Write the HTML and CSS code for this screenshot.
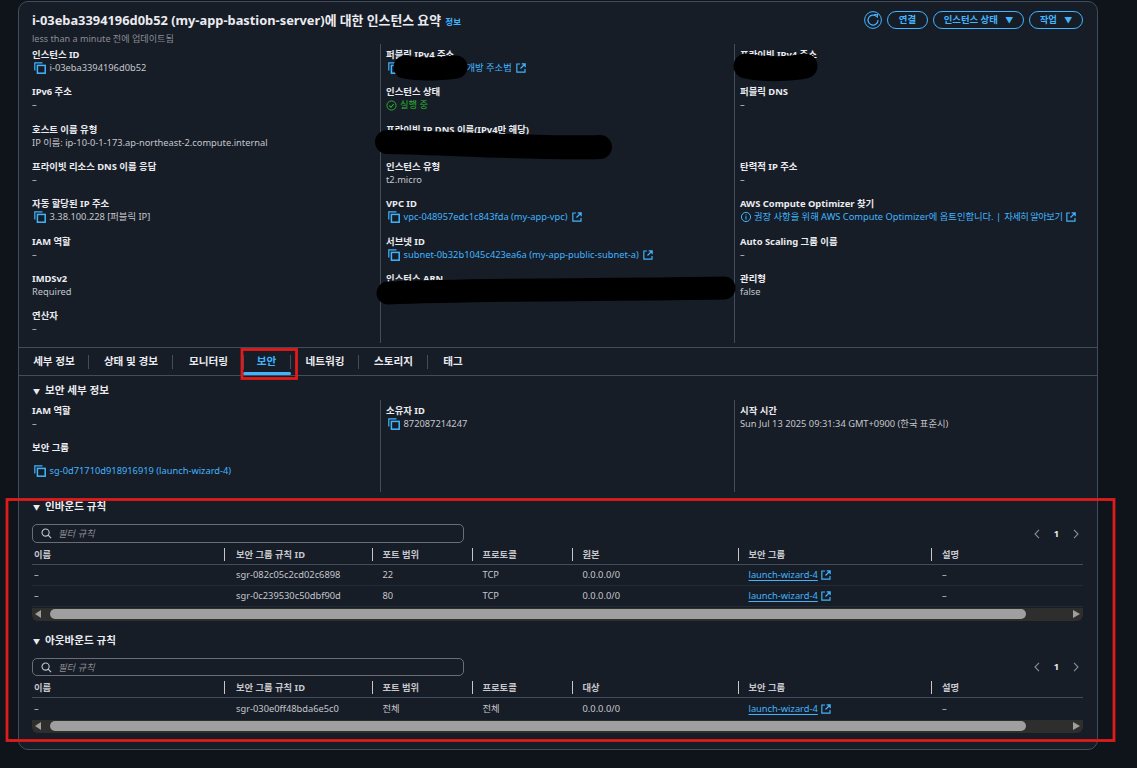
FILE: index.html
```html
<!DOCTYPE html>
<html lang="ko">
<head>
<meta charset="utf-8">
<title>인스턴스 요약</title>
<link rel="stylesheet" href="styles.css">
</head>
<body>
<svg class="defs" width="0" height="0" aria-hidden="true">
  <symbol id="copy" viewBox="0 0 12 12"><path d="M.8 8.5V.8h7.7" fill="none" stroke="currentColor" stroke-width="1.2"/><rect x="3.4" y="3.4" width="7.8" height="7.8" fill="none" stroke="currentColor" stroke-width="1.5"/></symbol>
  <symbol id="ext" viewBox="0 0 12 12"><path d="M4.8 1.2H1v9.8h9.8V7.2M6.8 1h4.2v4.2M10.8 1.2 5.4 6.6" fill="none" stroke="currentColor" stroke-width="1.4"/></symbol>
  <symbol id="search" viewBox="0 0 12 12"><circle cx="5" cy="5" r="3.9" fill="none" stroke="currentColor" stroke-width="1.2"/><path d="m7.8 7.8 3.2 3.2" stroke="currentColor" stroke-width="1.3"/></symbol>
  <symbol id="chev-l" viewBox="0 0 6 10"><path d="M5 .8 1 5l4 4.2" fill="none" stroke="currentColor" stroke-width="1.1"/></symbol>
  <symbol id="chev-r" viewBox="0 0 6 10"><path d="M1 .8 5 5 1 9.2" fill="none" stroke="currentColor" stroke-width="1.1"/></symbol>
</svg>
<main class="panel">
  <header class="head">
    <div>
      <h1 class="title">i-03eba3394196d0b52 (my-app-bastion-server)에 대한 인스턴스 요약 <a class="info">정보</a></h1>
      <p class="updated">less than a minute 전에 업데이트됨</p>
    </div>
    <div class="actions">
      <button class="refresh" aria-label="새로 고침"><svg viewBox="0 0 18 18" width="18" height="18"><circle cx="9" cy="9" r="8.4" fill="none" stroke="currentColor" stroke-width="1"/><path d="M12.6 5.6A5 5 0 1 0 14 9" fill="none" stroke="currentColor" stroke-width="1.2"/><path d="M10.2 3.6h3.2v3.2" fill="none" stroke="currentColor" stroke-width="1.2"/></svg></button>
      <button class="btn btn-connect">연결</button>
      <button class="btn btn-state">인스턴스 상태 <span class="caret">▼</span></button>
      <button class="btn btn-action">작업 <span class="caret">▼</span></button>
    </div>
  </header>

  <section class="summary">
    <div class="col">
      <div class="kv"><h3>인스턴스 ID</h3><p><svg class="ic-copy"><use href="#copy"/></svg>i-03eba3394196d0b52</p></div>
      <div class="kv"><h3>IPv6 주소</h3><p>–</p></div>
      <div class="kv"><h3>호스트 이름 유형</h3><p>IP 이름: ip-10-0-1-173.ap-northeast-2.compute.internal</p></div>
      <div class="kv"><h3>프라이빗 리소스 DNS 이름 응답</h3><p>–</p></div>
      <div class="kv"><h3>자동 할당된 IP 주소</h3><p><svg class="ic-copy"><use href="#copy"/></svg>3.38.100.228 [퍼블릭 IP]</p></div>
      <div class="kv"><h3>IAM 역할</h3><p>–</p></div>
      <div class="kv"><h3>IMDSv2</h3><p>Required</p></div>
      <div class="kv"><h3>연산자</h3><p>–</p></div>
    </div>
    <div class="col ruled">
      <div class="kv"><h3>퍼블릭 IPv4 주소</h3><p class="link"><svg class="ic-copy"><use href="#copy"/></svg><span class="masked"></span>개방 주소법<svg class="ic-ext"><use href="#ext"/></svg></p></div>
      <div class="kv"><h3>인스턴스 상태</h3><p class="ok"><svg class="ic-ok" viewBox="0 0 12 12"><circle cx="6" cy="6" r="5" fill="none" stroke="currentColor" stroke-width="1"/><path d="m3.6 6.2 1.8 1.8 3-3.6" fill="none" stroke="currentColor" stroke-width="1.1"/></svg>실행 중</p></div>
      <div class="kv"><h3>프라이빗 IP DNS 이름(IPv4만 해당)</h3><p></p></div>
      <div class="kv"><h3>인스턴스 유형</h3><p>t2.micro</p></div>
      <div class="kv"><h3>VPC ID</h3><p class="link"><svg class="ic-copy"><use href="#copy"/></svg>vpc-048957edc1c843fda (my-app-vpc)<svg class="ic-ext"><use href="#ext"/></svg></p></div>
      <div class="kv"><h3>서브넷 ID</h3><p class="link"><svg class="ic-copy"><use href="#copy"/></svg>subnet-0b32b1045c423ea6a (my-app-public-subnet-a)<svg class="ic-ext"><use href="#ext"/></svg></p></div>
      <div class="kv"><h3>인스턴스 ARN</h3><p></p></div>
    </div>
    <div class="col ruled">
      <div class="kv"><h3>프라이빗 IPv4 주소</h3><p></p></div>
      <div class="kv"><h3>퍼블릭 DNS</h3><p>–</p></div>
      <div class="kv"></div>
      <div class="kv"><h3>탄력적 IP 주소</h3><p>–</p></div>
      <div class="kv"><h3>AWS Compute Optimizer 찾기</h3><p class="optimizer"><svg class="ic-info" viewBox="0 0 12 12"><circle cx="6" cy="6" r="4.6" fill="none" stroke="currentColor" stroke-width="1"/><path d="M6 5.2v3.4M6 3.4v1" stroke="currentColor" stroke-width="1"/></svg>권장 사항을 위해 AWS Compute Optimizer에 옵트인합니다. |<span class="more">자세히 알아보기<svg class="ic-ext"><use href="#ext"/></svg></span></p></div>
      <div class="kv"><h3>Auto Scaling 그룹 이름</h3><p>–</p></div>
      <div class="kv"><h3>관리형</h3><p>false</p></div>
    </div>
  </section>

  <nav class="tabs">
    <a class="tab t1">세부 정보</a>
    <a class="tab t2">상태 및 경보</a>
    <a class="tab t3">모니터링</a>
    <a class="tab t4 active">보안</a>
    <a class="tab t5">네트워킹</a>
    <a class="tab t6">스토리지</a>
    <a class="tab t7">태그</a>
  </nav>

  <h2 class="sec-title detail-title"><span class="tri">▼</span>보안 세부 정보</h2>
  <section class="details">
    <div class="col">
      <div class="kv"><h3>IAM 역할</h3><p>–</p></div>
      <div class="kv tall"><h3>보안 그룹</h3><p class="link"><svg class="ic-copy"><use href="#copy"/></svg>sg-0d71710d918916919 (launch-wizard-4)</p></div>
    </div>
    <div class="col ruled">
      <div class="kv"><h3>소유자 ID</h3><p><svg class="ic-copy"><use href="#copy"/></svg>872087214247</p></div>
    </div>
    <div class="col ruled">
      <div class="kv"><h3>시작 시간</h3><p>Sun Jul 13 2025 09:31:34 GMT+0900 (한국 표준시)</p></div>
    </div>
  </section>

  <section class="rules inbound">
    <h2 class="sec-title"><span class="tri">▼</span>인바운드 규칙</h2>
    <div class="filter-row">
      <label class="filter"><svg class="ic-search"><use href="#search"/></svg><input placeholder="필터 규칙"></label>
      <div class="pager"><svg class="chev"><use href="#chev-l"/></svg><b>1</b><svg class="chev"><use href="#chev-r"/></svg></div>
    </div>
    <div class="row thead">
      <span>이름</span><span>보안 그룹 규칙 ID</span><span>포트 범위</span><span>프로토콜</span><span>원본</span><span>보안 그룹</span><span>설명</span>
    </div>
    <div class="row">
      <span>–</span><span>sgr-082c05c2cd02c6898</span><span>22</span><span>TCP</span><span>0.0.0.0/0</span><span class="link"><u>launch-wizard-4</u><svg class="ic-ext"><use href="#ext"/></svg></span><span>–</span>
    </div>
    <div class="row">
      <span>–</span><span>sgr-0c239530c50dbf90d</span><span>80</span><span>TCP</span><span>0.0.0.0/0</span><span class="link"><u>launch-wizard-4</u><svg class="ic-ext"><use href="#ext"/></svg></span><span>–</span>
    </div>
    <div class="scrollbar"><i class="arrow-l"></i><div class="thumb"></div><i class="arrow-r"></i></div>
  </section>

  <section class="rules outbound">
    <h2 class="sec-title"><span class="tri">▼</span>아웃바운드 규칙</h2>
    <div class="filter-row">
      <label class="filter"><svg class="ic-search"><use href="#search"/></svg><input placeholder="필터 규칙"></label>
      <div class="pager"><svg class="chev"><use href="#chev-l"/></svg><b>1</b><svg class="chev"><use href="#chev-r"/></svg></div>
    </div>
    <div class="row thead">
      <span>이름</span><span>보안 그룹 규칙 ID</span><span>포트 범위</span><span>프로토콜</span><span>대상</span><span>보안 그룹</span><span>설명</span>
    </div>
    <div class="row last">
      <span>–</span><span>sgr-030e0ff48bda6e5c0</span><span>전체</span><span>전체</span><span>0.0.0.0/0</span><span class="link"><u>launch-wizard-4</u><svg class="ic-ext"><use href="#ext"/></svg></span><span>–</span>
    </div>
    <div class="scrollbar"><i class="arrow-l"></i><div class="thumb"></div><i class="arrow-r"></i></div>
  </section>
</main>

<svg class="markup" width="1137" height="768" viewBox="0 0 1137 768" aria-hidden="true">
  <g fill="none" stroke="#000" stroke-linecap="round">
    <path d="M405 67 C420 70 440 69 456 67" stroke-width="23"/>
    <path d="M746 66 C765 70 790 69 805 66" stroke-width="25"/>
    <path d="M387 142 C450 143 540 149 600 147" stroke-width="24"/>
    <path d="M388 293 C480 289 620 290 724 288" stroke-width="23"/>
  </g>
  <rect class="mark" x="242" y="349.5" width="54.5" height="29"/>
  <rect class="mark" x="7" y="499.5" width="1107" height="241"/>
</svg>
</body>
</html>
```
FILE: styles.css
```css
* { box-sizing: border-box; }
html, body { margin: 0; padding: 0; }
body {
  background: #0f141a;
  color: #c6c6cd;
  font: 9.3px/14px "Noto Sans", "Noto Sans CJK KR", sans-serif;
  height: 768px;
  overflow: hidden;
}
.defs { position: absolute; }
h1, h2, h3, p { margin: 0; }

.panel {
  width: 1080px;
  height: 749px;
  margin: 1px 0 0 18px;
  padding: 0 13px;
  background: #161d26;
  border: 1px solid #414d5c;
  border-radius: 10px;
}

.head { display: flex; justify-content: space-between; height: 42px; padding-top: 9px; }
.title { font-size: 12.85px; line-height: 18px; font-weight: 700; color: #ebebf0; white-space: nowrap; }
.info { font-size: 8.5px; font-weight: 700; color: #42b4ff; margin-left: 1px; }
.updated { color: #8c8c94; font-size: 9.1px; line-height: 13px; margin-top: 1px; }
.actions { display: flex; gap: 5px; align-items: flex-start; margin-right: 1px; }
.refresh { width: 18px; height: 18px; padding: 0; border: 0; background: none; color: #42b4ff; }
.refresh svg { display: block; }
.btn {
  height: 18px;
  padding: 0 0 2px;
  border: 1px solid #42b4ff;
  border-radius: 9px;
  background: none;
  color: #42b4ff;
  font: 700 9.4px/13px "Noto Sans", "Noto Sans CJK KR", sans-serif;
}
.btn-connect { width: 41px; }
.btn-state { width: 91px; }
.btn-action { width: 54px; }
.caret { font-size: 8px; margin-left: 5px; }

.summary, .details {
  display: grid;
  grid-template-columns: 348px 354px 1fr;
}
.summary { height: 298px; }
.col { min-width: 0; }
.ruled { border-left: 1px solid #414d5c; padding-left: 5px; }
.kv { height: 37.34px; padding-top: 4px; white-space: nowrap; }
.kv h3 { font-size: 9.4px; line-height: 13px; font-weight: 700; color: #ebebf0; }
.kv p { line-height: 14px; min-height: 14px; display: flex; align-items: center; }
.link { color: #42b4ff; }
.ok { color: #2bb534; }
.ic-copy { width: 12px; height: 12px; margin: 0 4px 0 1.5px; color: #42b4ff; flex: none; }
.ic-ext { width: 10px; height: 10px; margin-left: 3px; color: #42b4ff; flex: none; vertical-align: -1px; }
.kv .ic-ext { margin-left: 4px; }
.ic-ok { width: 11px; height: 11px; margin-right: 3px; flex: none; }
.ic-info { width: 12px; height: 12px; margin-right: 2px; color: #42b4ff; flex: none; }
.optimizer { color: #42b4ff; }
.more { margin-left: 3px; display: flex; align-items: center; letter-spacing: -.5px; }
.masked { width: 63px; flex: none; }

.tabs {
  display: flex;
  height: 29px;
  margin: 5px -13px 0;
  border-top: 1px solid #414d5c;
  border-bottom: 1px solid #414d5c;
  font-size: 10.6px;
  font-weight: 700;
  color: #ebebf0;
}
.tab { display: flex; align-items: center; justify-content: center; position: relative; height: 27px; padding-bottom: 2px; }
.tab::after {
  content: "";
  position: absolute;
  right: 0;
  top: 7px;
  height: 14px;
  border-right: 1px solid #414d5c;
}
.t1 { width: 70px; }
.t2 { width: 84px; }
.t3 { width: 71px; }
.t4 { width: 47px; padding-right: 2px; color: #42b4ff; }
.t4::before {
  content: "";
  position: absolute;
  left: -1px; right: 0; bottom: 0;
  height: 3px;
  border-radius: 2px;
  background: #42b4ff;
}
.t5 { width: 68px; }
.t6 { width: 69px; }
.t7 { width: 50px; }
.t7::after { display: none; }

.sec-title { font-size: 10.6px; line-height: 16px; font-weight: 700; color: #ebebf0; }
.tri { font-size: 7px; margin: 0 5px 0 1px; }
.detail-title { margin-top: 6px; height: 18px; }
.details { height: 92px; }
.details .kv { height: 37px; padding-top: 0; }
.details .col { height: 92px; }
.details .col > .kv:first-child { padding-top: 4px; }
.details .tall { padding-top: 4px; }
.details .tall h3 { margin-bottom: 10px; }

.rules { width: 1051px; }
.inbound { margin-top: 6px; }
.outbound { margin-top: 11px; }
.filter-row { display: flex; justify-content: space-between; align-items: center; margin: 8px 0 2px; }
.inbound .filter-row { height: 19px; }
.outbound .filter-row { height: 18px; }
.filter {
  width: 432px;
  height: 100%;
  display: flex;
  align-items: center;
  padding-left: 8px;
  border: 1px solid #6c6c76;
  border-radius: 5px;
}
.ic-search { width: 11px; height: 11px; color: #c6c6cd; margin-right: 6px; flex: none; }
.filter input {
  flex: 1;
  border: 0;
  padding: 0;
  outline: 0;
  background: none;
  color: #c6c6cd;
  font: italic 9.3px "Noto Sans", "Noto Sans CJK KR", sans-serif;
}
.filter input::placeholder { color: #8c8c94; opacity: 1; }
.pager { display: flex; align-items: center; gap: 14px; padding-right: 4px; color: #ebebf0; font-size: 9.3px; }
.chev { width: 6px; height: 10px; color: #8c8c94; }

.row {
  display: grid;
  grid-template-columns: 192px 147.5px 100px 100px 166px 193.5px 1fr;
  height: 21px;
  align-items: center;
  border-bottom: 1px solid #232b37;
}
.row > span { padding-left: 11px; white-space: nowrap; display: flex; align-items: center; }
.row > span:first-child { padding-left: 2px; }
.row > span:nth-child(2) { padding-left: 12px; }
.row u { text-underline-offset: 2px; }
.thead { height: 20px; border-bottom-color: #414d5c; font-weight: 700; color: #c6c6cd; }
.thead > span { border-left: 1px solid #c6c6cd; height: 13px; line-height: 13px; padding-left: 10px; }
.thead > span:nth-child(2) { padding-left: 11px; }
.thead > span:first-child { border-left: 0; }
.row.last { border-bottom: 0; }

.scrollbar {
  display: flex;
  align-items: center;
  height: 13px;
  margin-top: 1px;
  padding: 0 3px 1px;
  border-radius: 0 0 6px 6px;
  background: #2e2e2c;
}
.thumb { width: 976px; height: 10px; margin-left: 9px; border-radius: 5px; background: #9f9f9f; flex: none; }
.arrow-l, .arrow-r { width: 0; height: 0; border-top: 4.5px solid transparent; border-bottom: 4.5px solid transparent; }
.arrow-l { border-right: 6px solid #9f9f9f; }
.arrow-r { border-left: 7px solid #9f9f9f; margin-left: auto; }

.markup { position: absolute; left: 0; top: 0; pointer-events: none; }
.mark { fill: none; stroke: #e01b1b; stroke-width: 2.8; }
```
